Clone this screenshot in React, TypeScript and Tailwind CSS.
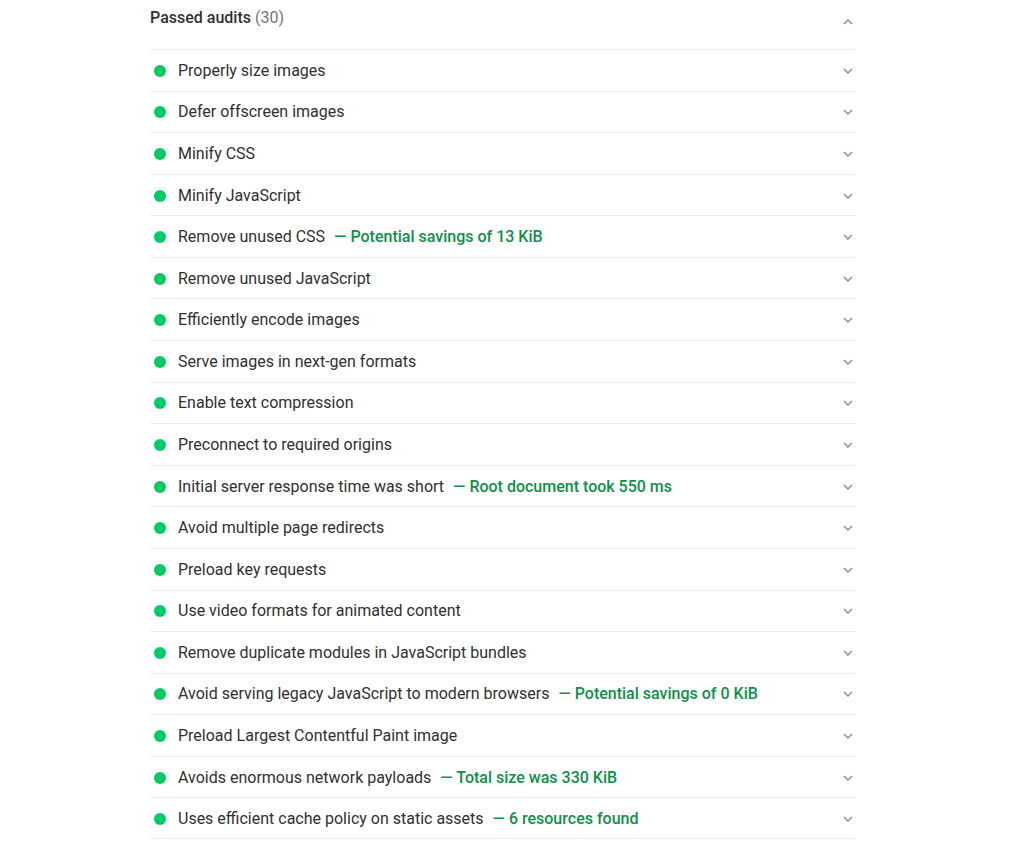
import React from 'react';

const audits: [string, string?][] = [
  ['Properly size images'],
  ['Defer offscreen images'],
  ['Minify CSS'],
  ['Minify JavaScript'],
  ['Remove unused CSS', 'Potential savings of 13 KiB'],
  ['Remove unused JavaScript'],
  ['Efficiently encode images'],
  ['Serve images in next-gen formats'],
  ['Enable text compression'],
  ['Preconnect to required origins'],
  ['Initial server response time was short', 'Root document took 550 ms'],
  ['Avoid multiple page redirects'],
  ['Preload key requests'],
  ['Use video formats for animated content'],
  ['Remove duplicate modules in JavaScript bundles'],
  ['Avoid serving legacy JavaScript to modern browsers', 'Potential savings of 0 KiB'],
  ['Preload Largest Contentful Paint image'],
  ['Avoids enormous network payloads', 'Total size was 330 KiB'],
  ['Uses efficient cache policy on static assets', '6 resources found'],
];

function Chevron({ up }: { up?: boolean }) {
  return (
    <svg width="10" height="6" viewBox="0 0 10 6" className={up ? 'rotate-180' : ''}>
      <polyline points="1,1 5,5 9,1" fill="none" stroke="#8a8a8a" strokeWidth="1.4" />
    </svg>
  );
}

export default function App() {
  return (
    <div className="min-h-[847px] bg-white font-['Roboto',sans-serif] text-[16px] text-[#303030]">
      <div className="ml-[150px] w-[705px]">
        {/* group header */}
        <div className="flex h-[49px] items-start justify-between">
          <p className="pt-[7px] leading-[22px] font-medium">
            Passed audits <span className="font-normal text-[#757575]">(30)</span>
          </p>
          <div className="mr-[2px] pt-[19px]">
            <Chevron up />
          </div>
        </div>

        {audits.map(([title, note], i) => (
          <div
            key={title}
            className={
              'flex h-[41.58px] items-center justify-between border-t border-[#ebebeb] pt-[1px] ' +
              (i === audits.length - 1 ? 'border-b' : '')
            }
          >
            <div className="flex items-center">
              <span className="ml-[4px] mr-[12px] h-[12px] w-[12px] rounded-full bg-[#0c6]" />
              <span className="leading-[22px]">{title}</span>
              {note && (
                <span className="ml-[9px] leading-[22px] font-medium text-[#0d9047]">— {note}</span>
              )}
            </div>
            <div className="mr-[2px]">
              <Chevron />
            </div>
          </div>
        ))}
      </div>
    </div>
  );
}
